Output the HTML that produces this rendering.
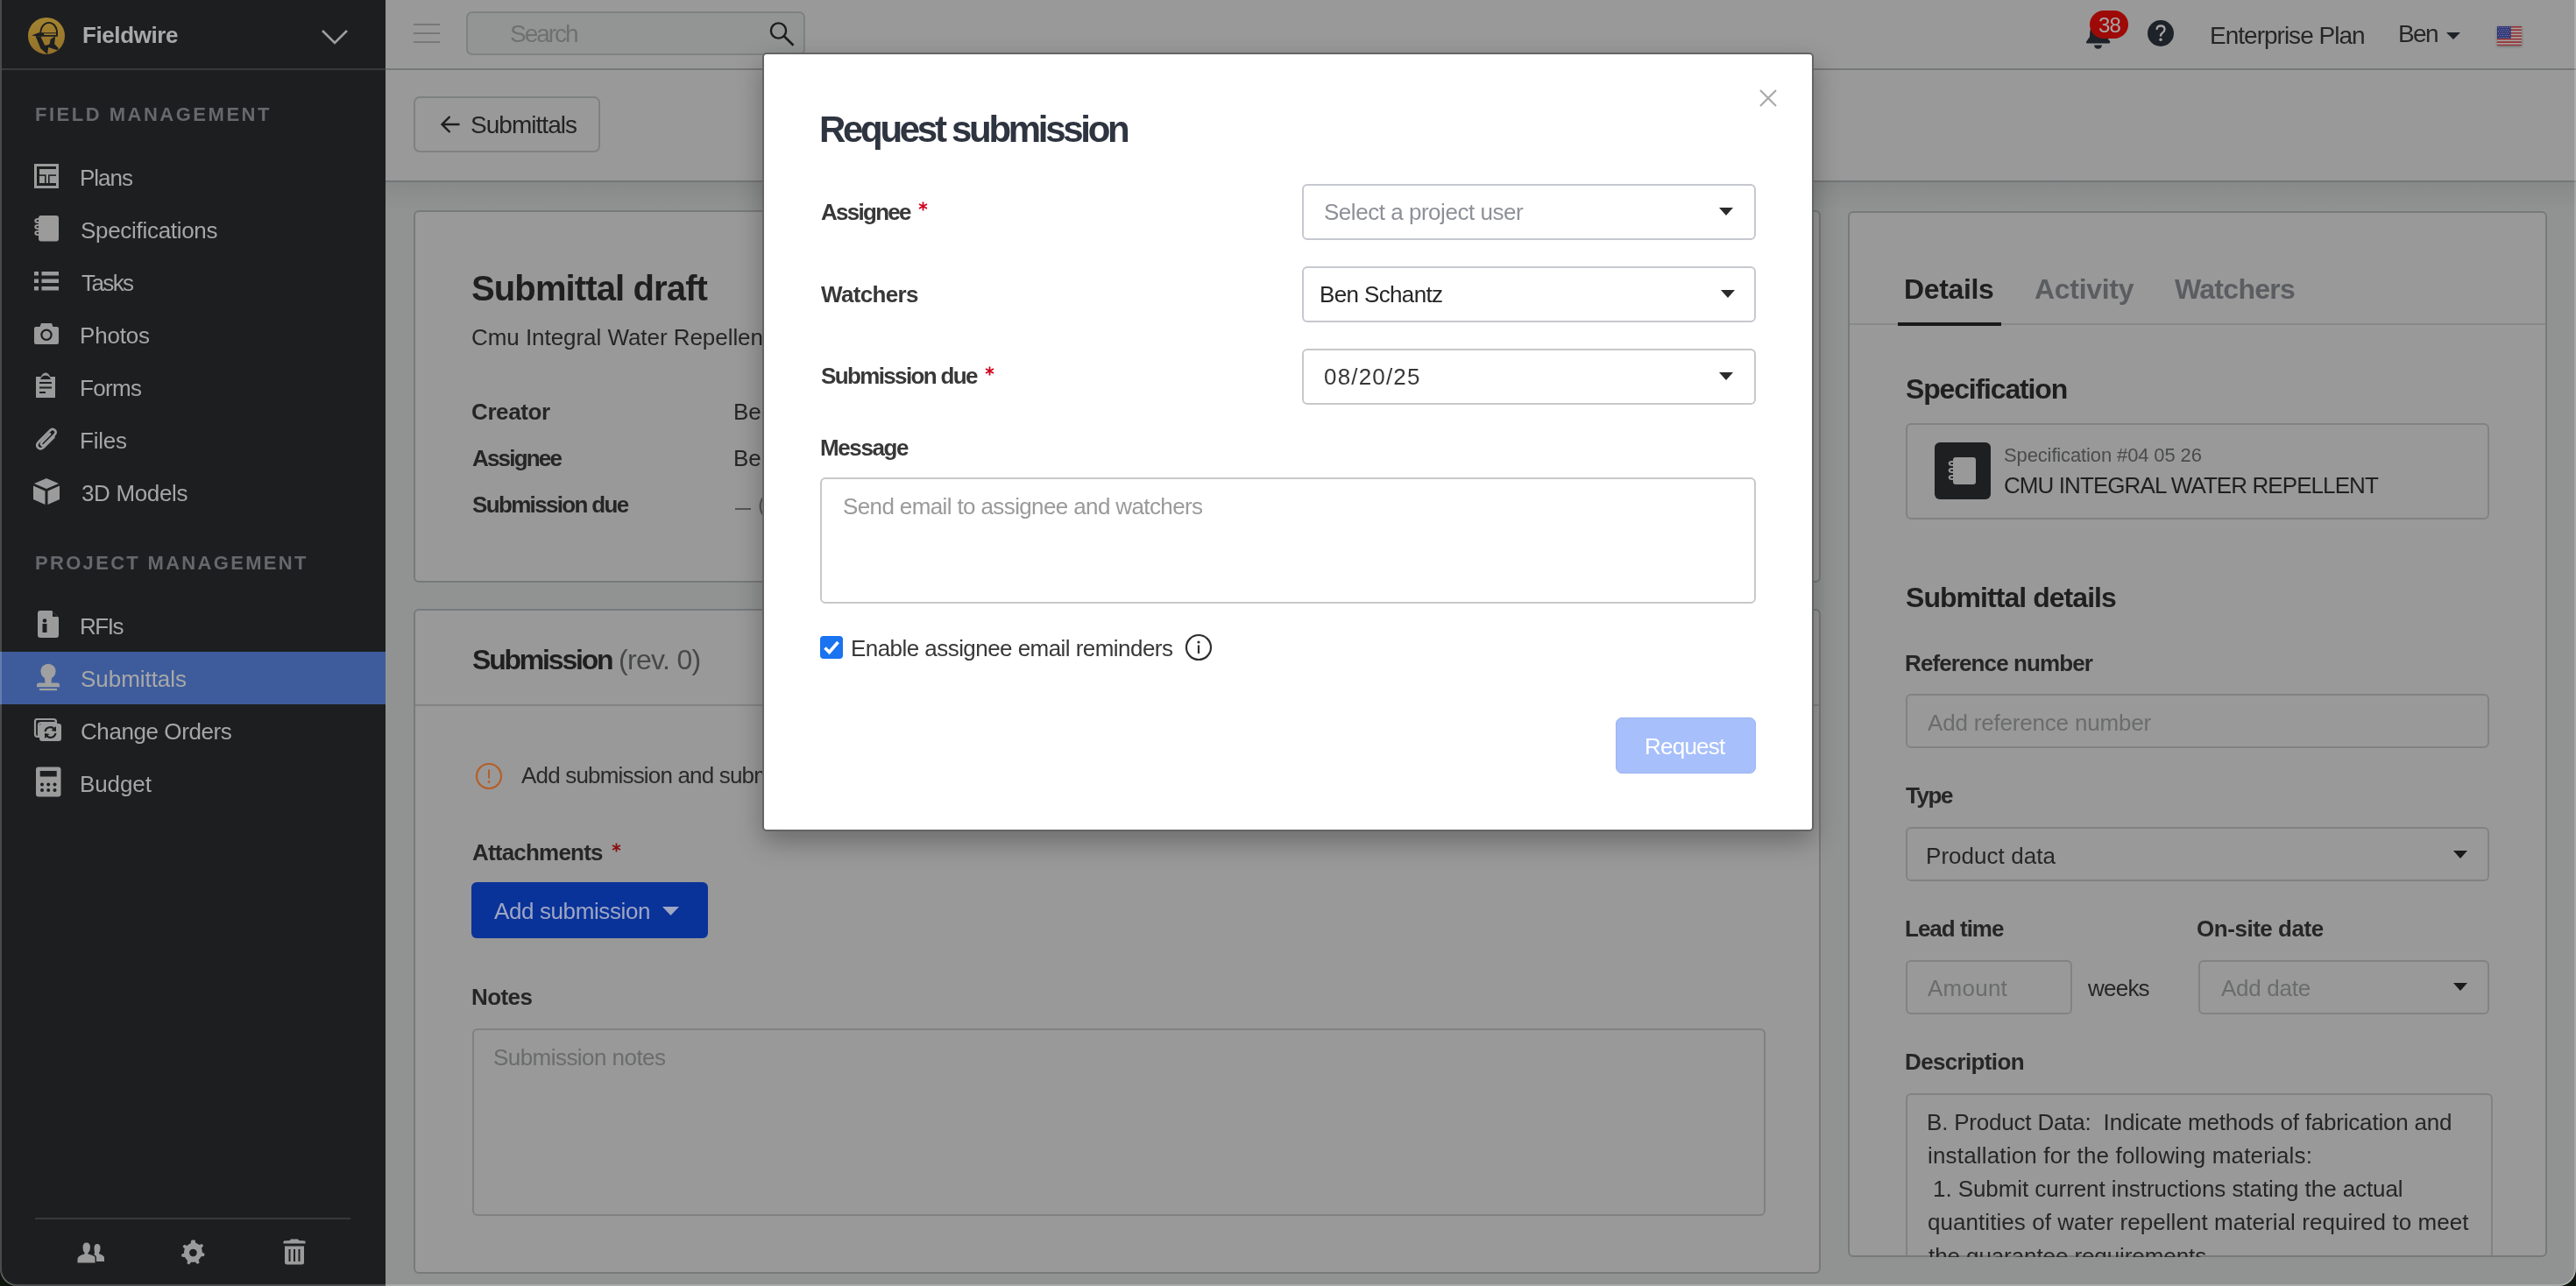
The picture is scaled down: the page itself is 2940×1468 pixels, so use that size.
<!DOCTYPE html>
<html><head><meta charset="utf-8"><title>Fieldwire - Request submission</title>
<style>
html,body{margin:0;padding:0;width:2940px;height:1468px;overflow:hidden;background:#8f9191;font-family:"Liberation Sans",sans-serif;}
body{position:relative;}
.t{position:absolute;white-space:pre;font-family:"Liberation Sans",sans-serif;will-change:transform;}
</style></head><body>
<div style="position:absolute;left:440px;top:0px;width:2500px;height:1468px;background:#919393"></div>
<div style="position:absolute;left:440px;top:0px;width:2500px;height:207px;background:#999999"></div>
<div style="position:absolute;left:440px;top:78px;width:2500px;height:2px;background:#767878"></div>
<div style="position:absolute;left:440px;top:206px;width:2500px;height:2px;background:#737577"></div>
<div style="position:absolute;left:440px;top:208px;width:2500px;height:32px;background:linear-gradient(#888a8a,#919393)"></div>
<div style="position:absolute;left:0px;top:0px;width:440px;height:1468px;background:#1d1e20"></div>
<div style="position:absolute;left:2px;top:78px;width:438px;height:2px;background:#38393b"></div>
<div class="t" style="left:94.0px;top:27.3px;font-weight:bold;font-size:26px;line-height:26px;color:#a9a9a9;letter-spacing:-0.40px;">Fieldwire</div>
<div class="t" style="left:39.7px;top:120.4px;font-weight:bold;font-size:22px;line-height:22px;color:#66686c;letter-spacing:2.51px;">FIELD MANAGEMENT</div>
<div class="t" style="left:91.0px;top:189.8px;font-weight:normal;font-size:26px;line-height:26px;color:#a6a6a6;letter-spacing:-1.01px;">Plans</div>
<div class="t" style="left:92.0px;top:249.8px;font-weight:normal;font-size:26px;line-height:26px;color:#a6a6a6;letter-spacing:-0.30px;">Specifications</div>
<div class="t" style="left:93.0px;top:309.8px;font-weight:normal;font-size:26px;line-height:26px;color:#a6a6a6;letter-spacing:-1.61px;">Tasks</div>
<div class="t" style="left:91.0px;top:369.8px;font-weight:normal;font-size:26px;line-height:26px;color:#a6a6a6;letter-spacing:-0.19px;">Photos</div>
<div class="t" style="left:91.0px;top:429.8px;font-weight:normal;font-size:26px;line-height:26px;color:#a6a6a6;letter-spacing:-0.66px;">Forms</div>
<div class="t" style="left:91.0px;top:489.8px;font-weight:normal;font-size:26px;line-height:26px;color:#a6a6a6;letter-spacing:-0.22px;">Files</div>
<div class="t" style="left:93.0px;top:549.8px;font-weight:normal;font-size:26px;line-height:26px;color:#a6a6a6;letter-spacing:-0.35px;">3D Models</div>
<div class="t" style="left:39.7px;top:632.4px;font-weight:bold;font-size:22px;line-height:22px;color:#66686c;letter-spacing:2.31px;">PROJECT MANAGEMENT</div>
<div style="position:absolute;left:0px;top:744px;width:440px;height:60px;background:#3e5c9c"></div>
<div class="t" style="left:91.0px;top:702.0px;font-weight:normal;font-size:26px;line-height:26px;color:#a6a6a6;letter-spacing:-1.46px;">RFIs</div>
<div class="t" style="left:92.0px;top:762.0px;font-weight:normal;font-size:26px;line-height:26px;color:#a8a8a8;letter-spacing:-0.04px;">Submittals</div>
<div class="t" style="left:92.0px;top:822.0px;font-weight:normal;font-size:26px;line-height:26px;color:#a6a6a6;letter-spacing:-0.42px;">Change Orders</div>
<div class="t" style="left:91.0px;top:882.0px;font-weight:normal;font-size:26px;line-height:26px;color:#a6a6a6;letter-spacing:-0.10px;">Budget</div>
<div style="position:absolute;left:40px;top:1390px;width:360px;height:2px;background:#38393b"></div>
<div style="position:absolute;left:472px;top:27px;width:30px;height:2px;background:#777879"></div>
<div style="position:absolute;left:472px;top:37px;width:30px;height:2px;background:#777879"></div>
<div style="position:absolute;left:472px;top:47px;width:30px;height:2px;background:#777879"></div>
<div style="position:absolute;left:532px;top:13px;width:387px;height:50px;background:#939595;border:2px solid #7f8181;border-radius:7px;box-sizing:border-box"></div>
<div class="t" style="left:582.0px;top:24.8px;font-weight:normal;font-size:28px;line-height:28px;color:#6f7070;letter-spacing:-2.03px;">Search</div>
<div class="t" style="left:2522.0px;top:27.1px;font-weight:normal;font-size:28px;line-height:28px;color:#262626;letter-spacing:-0.99px;">Enterprise Plan</div>
<div class="t" style="left:2737.0px;top:24.8px;font-weight:normal;font-size:28px;line-height:28px;color:#262626;letter-spacing:-1.62px;">Ben</div>
<svg style="position:absolute;left:876px;top:23px;overflow:visible;" width="34" height="32" viewBox="0 0 34 32"><circle cx="12.5" cy="12" r="8.6" fill="none" stroke="#1c1c1c" stroke-width="2.4"/><path d="M18.8,18.3 L29.5,28.7" stroke="#1c1c1c" stroke-width="2.6"/></svg>
<svg style="position:absolute;left:2380px;top:12px;overflow:visible;" width="32" height="46" viewBox="0 0 32 46"><path d="M5,30 Q5,22 7,18 L20,18 Q24,24 24,30 L28,35 Q29,37.5 26.5,37.5 L2.5,37.5 Q0,37.5 1.5,35 Z" fill="#1e2229"/><path d="M10,39.5 L19,39.5 Q18.5,43.7 14.5,43.7 Q10.5,43.7 10,39.5 Z" fill="#1e2229"/></svg>
<div style="position:absolute;left:2385px;top:12px;width:44px;height:32px;background:#9e0a07;border-radius:16px"></div>
<div class="t" style="left:2394.7px;top:16.7px;font-weight:normal;font-size:24px;line-height:24px;color:#a6a6a6;letter-spacing:-0.85px;">38</div>
<svg style="position:absolute;left:2451px;top:23px;overflow:visible;" width="30" height="30" viewBox="0 0 30 30"><circle cx="15" cy="15" r="15" fill="#1e2229"/><path d="M10.5,10.8 Q10.8,6.5 15,6.5 Q19.5,6.5 19.5,10.5 Q19.5,13 17,14.5 Q15,15.7 15,18.5" fill="none" stroke="#a5a5a5" stroke-width="2.3"/><circle cx="15" cy="22.3" r="1.7" fill="#a5a5a5"/></svg>
<svg style="position:absolute;left:2792px;top:37px;overflow:visible;" width="16" height="8" viewBox="0 0 16 8"><path d="M0,0 L16,0 L8,8 Z" fill="#1e2129"/></svg>
<svg style="position:absolute;left:2850px;top:29.5px;filter:drop-shadow(0 1px 1.5px rgba(0,0,0,0.35))" width="28" height="22.5" viewBox="0 0 28 22.5"><rect x="0" y="0.00" width="28" height="1.78" fill="#9a3236"/><rect x="0" y="1.73" width="28" height="1.78" fill="#a9a3a3"/><rect x="0" y="3.46" width="28" height="1.78" fill="#9a3236"/><rect x="0" y="5.19" width="28" height="1.78" fill="#a9a3a3"/><rect x="0" y="6.92" width="28" height="1.78" fill="#9a3236"/><rect x="0" y="8.65" width="28" height="1.78" fill="#a9a3a3"/><rect x="0" y="10.38" width="28" height="1.78" fill="#9a3236"/><rect x="0" y="12.12" width="28" height="1.78" fill="#a9a3a3"/><rect x="0" y="13.85" width="28" height="1.78" fill="#9a3236"/><rect x="0" y="15.58" width="28" height="1.78" fill="#a9a3a3"/><rect x="0" y="17.31" width="28" height="1.78" fill="#9a3236"/><rect x="0" y="19.04" width="28" height="1.78" fill="#a9a3a3"/><rect x="0" y="20.77" width="28" height="1.78" fill="#9a3236"/><rect x="0" y="0" width="15.7" height="13.9" fill="#2f3575"/><circle cx="1.60" cy="1.40" r="0.55" fill="#8e93b8"/><circle cx="4.10" cy="1.40" r="0.55" fill="#8e93b8"/><circle cx="6.60" cy="1.40" r="0.55" fill="#8e93b8"/><circle cx="9.10" cy="1.40" r="0.55" fill="#8e93b8"/><circle cx="11.60" cy="1.40" r="0.55" fill="#8e93b8"/><circle cx="14.10" cy="1.40" r="0.55" fill="#8e93b8"/><circle cx="2.85" cy="3.65" r="0.55" fill="#8e93b8"/><circle cx="5.35" cy="3.65" r="0.55" fill="#8e93b8"/><circle cx="7.85" cy="3.65" r="0.55" fill="#8e93b8"/><circle cx="10.35" cy="3.65" r="0.55" fill="#8e93b8"/><circle cx="12.85" cy="3.65" r="0.55" fill="#8e93b8"/><circle cx="1.60" cy="5.90" r="0.55" fill="#8e93b8"/><circle cx="4.10" cy="5.90" r="0.55" fill="#8e93b8"/><circle cx="6.60" cy="5.90" r="0.55" fill="#8e93b8"/><circle cx="9.10" cy="5.90" r="0.55" fill="#8e93b8"/><circle cx="11.60" cy="5.90" r="0.55" fill="#8e93b8"/><circle cx="14.10" cy="5.90" r="0.55" fill="#8e93b8"/><circle cx="2.85" cy="8.15" r="0.55" fill="#8e93b8"/><circle cx="5.35" cy="8.15" r="0.55" fill="#8e93b8"/><circle cx="7.85" cy="8.15" r="0.55" fill="#8e93b8"/><circle cx="10.35" cy="8.15" r="0.55" fill="#8e93b8"/><circle cx="12.85" cy="8.15" r="0.55" fill="#8e93b8"/><circle cx="1.60" cy="10.40" r="0.55" fill="#8e93b8"/><circle cx="4.10" cy="10.40" r="0.55" fill="#8e93b8"/><circle cx="6.60" cy="10.40" r="0.55" fill="#8e93b8"/><circle cx="9.10" cy="10.40" r="0.55" fill="#8e93b8"/><circle cx="11.60" cy="10.40" r="0.55" fill="#8e93b8"/><circle cx="14.10" cy="10.40" r="0.55" fill="#8e93b8"/><circle cx="2.85" cy="12.65" r="0.55" fill="#8e93b8"/><circle cx="5.35" cy="12.65" r="0.55" fill="#8e93b8"/><circle cx="7.85" cy="12.65" r="0.55" fill="#8e93b8"/><circle cx="10.35" cy="12.65" r="0.55" fill="#8e93b8"/><circle cx="12.85" cy="12.65" r="0.55" fill="#8e93b8"/></svg>
<div style="position:absolute;left:472px;top:110px;width:213px;height:64px;border:2px solid #7e8081;border-radius:7px;box-sizing:border-box"></div>
<svg style="position:absolute;left:502px;top:131px;overflow:visible;" width="24" height="22" viewBox="0 0 24 22"><path d="M22.5,11 L3,11 M11.5,2 L2.5,11 L11.5,20" fill="none" stroke="#1e1e1e" stroke-width="2.4"/></svg>
<div class="t" style="left:537.4px;top:128.9px;font-weight:normal;font-size:28px;line-height:28px;color:#232323;letter-spacing:-0.97px;">Submittals</div>
<div style="position:absolute;left:472px;top:240px;width:1606px;height:425px;background:#999999;border:2px solid #77797b;border-radius:6px;box-sizing:border-box"></div>
<div class="t" style="left:538.3px;top:309.1px;font-weight:bold;font-size:40px;line-height:40px;color:#1f1f1f;letter-spacing:-0.88px;">Submittal draft</div>
<div class="t" style="left:538.0px;top:371.7px;font-weight:normal;font-size:26px;line-height:26px;color:#262626;letter-spacing:-0.05px;">Cmu Integral Water Repellent</div>
<div class="t" style="left:538.0px;top:457.0px;font-weight:bold;font-size:26px;line-height:26px;color:#262626;letter-spacing:-0.39px;">Creator</div>
<div class="t" style="left:539.0px;top:509.7px;font-weight:bold;font-size:26px;line-height:26px;color:#262626;letter-spacing:-1.81px;">Assignee</div>
<div class="t" style="left:539.0px;top:562.5px;font-weight:bold;font-size:26px;line-height:26px;color:#262626;letter-spacing:-1.66px;">Submission due</div>
<div class="t" style="left:837.0px;top:457.0px;font-weight:normal;font-size:26px;line-height:26px;color:#262626;letter-spacing:0.00px;">Ben Schantz</div>
<div class="t" style="left:837.0px;top:509.7px;font-weight:normal;font-size:26px;line-height:26px;color:#262626;letter-spacing:0.00px;">Ben Schantz</div>
<div style="position:absolute;left:839px;top:580px;width:18px;height:2px;background:#555757"></div>
<div class="t" style="left:865.0px;top:562.5px;font-weight:normal;font-size:26px;line-height:26px;color:#555757;letter-spacing:0.00px;">(</div>
<div style="position:absolute;left:472px;top:695px;width:1606px;height:759px;background:#999999;border:2px solid #77797b;border-radius:6px;box-sizing:border-box"></div>
<div class="t" style="left:539.0px;top:736.5px;font-weight:bold;font-size:32px;line-height:32px;color:#1f1f1f;letter-spacing:-2.20px;">Submission</div>
<div class="t" style="left:706.4px;top:736.5px;font-weight:normal;font-size:32px;line-height:32px;color:#474849;letter-spacing:-0.67px;">(rev. 0)</div>
<div style="position:absolute;left:474px;top:804px;width:1602px;height:2px;background:#828384"></div>
<div class="t" style="left:595.0px;top:871.7px;font-weight:normal;font-size:26px;line-height:26px;color:#2a2a2a;letter-spacing:-0.82px;">Add submission and submit to assignee</div>
<div class="t" style="left:539.0px;top:959.8px;font-weight:bold;font-size:26px;line-height:26px;color:#262626;letter-spacing:-0.80px;">Attachments</div>
<svg style="position:absolute;left:698px;top:962px;overflow:visible;" width="11" height="11" viewBox="0 0 11 11"><path d="M5.5,0.5 L5.5,10.5 M1,3 L10,8 M10,3 L1,8" stroke="#8b1010" stroke-width="1.8"/></svg>
<svg style="position:absolute;left:542px;top:870px;overflow:visible;" width="32" height="32" viewBox="0 0 32 32"><circle cx="16" cy="16" r="14" fill="none" stroke="#b4602a" stroke-width="2.2"/><rect x="15" y="8.5" width="2" height="10" fill="#b4602a"/><circle cx="16" cy="22.5" r="1.4" fill="#b4602a"/></svg>
<div style="position:absolute;left:538px;top:1007px;width:270px;height:64px;background:#0a3399;border-radius:6px"></div>
<div class="t" style="left:564.0px;top:1026.8px;font-weight:normal;font-size:26px;line-height:26px;color:#9ea6c4;letter-spacing:-0.39px;">Add submission</div>
<svg style="position:absolute;left:756px;top:1035px;overflow:visible;" width="19" height="10" viewBox="0 0 19 10"><path d="M0,0 L19,0 L9.5,10 Z" fill="#9ea6c4"/></svg>
<div class="t" style="left:538.0px;top:1125.0px;font-weight:bold;font-size:26px;line-height:26px;color:#262626;letter-spacing:-0.57px;">Notes</div>
<div style="position:absolute;left:539px;top:1174px;width:1476px;height:214px;border:2px solid #808182;border-radius:6px;box-sizing:border-box"></div>
<div class="t" style="left:563.4px;top:1193.8px;font-weight:normal;font-size:26px;line-height:26px;color:#6b6c6c;letter-spacing:-0.55px;">Submission notes</div>
<div style="position:absolute;left:2109px;top:241px;width:798px;height:1194px;background:#999999;border:2px solid #77797b;border-radius:6px;box-sizing:border-box;overflow:hidden"></div>
<div style="position:absolute;left:2111px;top:369px;width:794px;height:2px;background:#878889"></div>
<div style="position:absolute;left:2166px;top:368px;width:118px;height:4px;background:#1a1a1a"></div>
<div class="t" style="left:2172.6px;top:313.9px;font-weight:bold;font-size:32px;line-height:32px;color:#1f1f1f;letter-spacing:-0.36px;">Details</div>
<div class="t" style="left:2321.7px;top:313.9px;font-weight:bold;font-size:32px;line-height:32px;color:#5b5d61;letter-spacing:-0.31px;">Activity</div>
<div class="t" style="left:2481.8px;top:313.9px;font-weight:bold;font-size:32px;line-height:32px;color:#5b5d61;letter-spacing:-0.72px;">Watchers</div>
<div class="t" style="left:2174.6px;top:427.9px;font-weight:bold;font-size:32px;line-height:32px;color:#1f1f1f;letter-spacing:-1.16px;">Specification</div>
<div style="position:absolute;left:2175px;top:483px;width:666px;height:110px;border:2px solid #818283;border-radius:6px;box-sizing:border-box"></div>
<div style="position:absolute;left:2208px;top:505px;width:64px;height:65px;background:#1e1f21;border-radius:6px"></div>
<svg style="position:absolute;left:2223px;top:521px;overflow:visible;" width="34" height="34" viewBox="0 0 34 34"><rect x="6" y="1" width="26" height="31" rx="3" fill="#999999"/><g fill="none" stroke="#999999" stroke-width="2"><ellipse cx="5" cy="8" rx="3.3" ry="2"/><ellipse cx="5" cy="16" rx="3.3" ry="2"/><ellipse cx="5" cy="24" rx="3.3" ry="2"/></g></svg>
<div class="t" style="left:2287.0px;top:508.8px;font-weight:normal;font-size:22px;line-height:22px;color:#4a4b4c;letter-spacing:-0.13px;">Specification #04 05 26</div>
<div class="t" style="left:2287.0px;top:541.3px;font-weight:normal;font-size:26px;line-height:26px;color:#1f1f1f;letter-spacing:-0.92px;">CMU INTEGRAL WATER REPELLENT</div>
<div class="t" style="left:2174.6px;top:665.9px;font-weight:bold;font-size:32px;line-height:32px;color:#1f1f1f;letter-spacing:-0.95px;">Submittal details</div>
<div class="t" style="left:2173.6px;top:743.6px;font-weight:bold;font-size:26px;line-height:26px;color:#262626;letter-spacing:-0.89px;">Reference number</div>
<div style="position:absolute;left:2175px;top:792px;width:666px;height:62px;border:2px solid #818283;border-radius:6px;box-sizing:border-box"></div>
<div class="t" style="left:2200.3px;top:812.0px;font-weight:normal;font-size:26px;line-height:26px;color:#6b6c6c;letter-spacing:-0.19px;">Add reference number</div>
<div class="t" style="left:2174.6px;top:895.0px;font-weight:bold;font-size:26px;line-height:26px;color:#262626;letter-spacing:-1.43px;">Type</div>
<div style="position:absolute;left:2175px;top:944px;width:666px;height:62px;border:2px solid #818283;border-radius:6px;box-sizing:border-box"></div>
<div class="t" style="left:2198.3px;top:963.5px;font-weight:normal;font-size:26px;line-height:26px;color:#262626;letter-spacing:0.04px;">Product data</div>
<svg style="position:absolute;left:2800px;top:971px;overflow:visible;" width="16" height="9" viewBox="0 0 16 9"><path d="M0,0 L16,0 L8,9 Z" fill="#1a1a1a"/></svg>
<div class="t" style="left:2173.6px;top:1047.3px;font-weight:bold;font-size:26px;line-height:26px;color:#262626;letter-spacing:-0.99px;">Lead time</div>
<div class="t" style="left:2507.2px;top:1047.3px;font-weight:bold;font-size:26px;line-height:26px;color:#262626;letter-spacing:-0.46px;">On-site date</div>
<div style="position:absolute;left:2175px;top:1096px;width:190px;height:62px;border:2px solid #818283;border-radius:6px;box-sizing:border-box"></div>
<div class="t" style="left:2200.0px;top:1115.4px;font-weight:normal;font-size:26px;line-height:26px;color:#6b6c6c;letter-spacing:0.24px;">Amount</div>
<div class="t" style="left:2383.0px;top:1115.4px;font-weight:normal;font-size:26px;line-height:26px;color:#262626;letter-spacing:-0.77px;">weeks</div>
<div style="position:absolute;left:2509px;top:1096px;width:332px;height:62px;border:2px solid #818283;border-radius:6px;box-sizing:border-box"></div>
<div class="t" style="left:2535.0px;top:1115.4px;font-weight:normal;font-size:26px;line-height:26px;color:#6b6c6c;letter-spacing:-0.28px;">Add date</div>
<svg style="position:absolute;left:2800px;top:1122px;overflow:visible;" width="16" height="9" viewBox="0 0 16 9"><path d="M0,0 L16,0 L8,9 Z" fill="#1a1a1a"/></svg>
<div class="t" style="left:2173.8px;top:1199.0px;font-weight:bold;font-size:26px;line-height:26px;color:#262626;letter-spacing:-0.65px;">Description</div>
<div style="position:absolute;left:2111px;top:243px;width:794px;height:1190px;overflow:hidden"><div style="position:absolute;left:64px;top:1005px;width:670px;height:300px;border:2px solid #818283;border-radius:6px;box-sizing:border-box"></div></div>
<div class="t" style="left:2198.8px;top:1268.4px;font-weight:normal;font-size:26px;line-height:26px;color:#262626;letter-spacing:-0.20px;">B. Product Data:  Indicate methods of fabrication and</div>
<div class="t" style="left:2199.8px;top:1306.2px;font-weight:normal;font-size:26px;line-height:26px;color:#262626;letter-spacing:0.17px;">installation for the following materials:</div>
<div class="t" style="left:2205.9px;top:1344.0px;font-weight:normal;font-size:26px;line-height:26px;color:#262626;letter-spacing:-0.08px;">1. Submit current instructions stating the actual</div>
<div class="t" style="left:2199.8px;top:1381.8px;font-weight:normal;font-size:26px;line-height:26px;color:#262626;letter-spacing:0.06px;">quantities of water repellent material required to meet</div>
<div class="t" style="left:2200.7px;top:1421.0px;font-weight:normal;font-size:26px;line-height:26px;color:#262626;letter-spacing:-0.09px;clip-path:inset(-20px -20px 12.6px -20px)">the guarantee requirements.</div>
<div style="position:absolute;left:870px;top:60px;width:1200px;height:889px;background:#ffffff;border:2px solid #646464;border-radius:5px;box-sizing:border-box;box-shadow:0 12px 30px rgba(0,0,0,0.3)"></div>
<svg style="position:absolute;left:2008px;top:102px;overflow:visible;" width="20" height="20" viewBox="0 0 20 20"><path d="M1,1 L19,19 M19,1 L1,19" stroke="#a9a9a9" stroke-width="2.2"/></svg>
<svg style="position:absolute;left:1048px;top:230px;overflow:visible;" width="11" height="11" viewBox="0 0 11 11"><path d="M5.5,0.5 L5.5,10.5 M1,3 L10,8 M10,3 L1,8" stroke="#d0021b" stroke-width="1.8"/></svg>
<svg style="position:absolute;left:1124px;top:418px;overflow:visible;" width="11" height="11" viewBox="0 0 11 11"><path d="M5.5,0.5 L5.5,10.5 M1,3 L10,8 M10,3 L1,8" stroke="#d0021b" stroke-width="1.8"/></svg>
<svg style="position:absolute;left:1962px;top:237px;overflow:visible;" width="16" height="9" viewBox="0 0 16 9"><path d="M0,0 L16,0 L8,9 Z" fill="#2b2b2b"/></svg>
<svg style="position:absolute;left:1964px;top:331px;overflow:visible;" width="16" height="9" viewBox="0 0 16 9"><path d="M0,0 L16,0 L8,9 Z" fill="#2b2b2b"/></svg>
<svg style="position:absolute;left:1962px;top:425px;overflow:visible;" width="16" height="9" viewBox="0 0 16 9"><path d="M0,0 L16,0 L8,9 Z" fill="#2b2b2b"/></svg>
<div class="t" style="left:935.0px;top:127.4px;font-weight:bold;font-size:42px;line-height:42px;color:#2f3540;letter-spacing:-3.30px;">Request submission</div>
<div class="t" style="left:936.6px;top:228.8px;font-weight:bold;font-size:26px;line-height:26px;color:#383838;letter-spacing:-1.73px;">Assignee</div>
<div class="t" style="left:936.6px;top:322.8px;font-weight:bold;font-size:26px;line-height:26px;color:#383838;letter-spacing:-0.66px;">Watchers</div>
<div class="t" style="left:936.6px;top:416.4px;font-weight:bold;font-size:26px;line-height:26px;color:#383838;letter-spacing:-1.64px;">Submission due</div>
<div class="t" style="left:935.6px;top:498.0px;font-weight:bold;font-size:26px;line-height:26px;color:#383838;letter-spacing:-1.40px;">Message</div>
<div style="position:absolute;left:1486px;top:210px;width:518px;height:64px;border:2px solid #c6c8cf;border-radius:6px;box-sizing:border-box"></div>
<div style="position:absolute;left:1486px;top:304px;width:518px;height:64px;border:2px solid #c6c8cf;border-radius:6px;box-sizing:border-box"></div>
<div style="position:absolute;left:1486px;top:398px;width:518px;height:64px;border:2px solid #c8c8c8;border-radius:6px;box-sizing:border-box"></div>
<div class="t" style="left:1511.0px;top:228.8px;font-weight:normal;font-size:26px;line-height:26px;color:#8e9099;letter-spacing:-0.47px;">Select a project user</div>
<div class="t" style="left:1506.0px;top:322.9px;font-weight:normal;font-size:26px;line-height:26px;color:#262626;letter-spacing:-0.64px;">Ben Schantz</div>
<div class="t" style="left:1510.5px;top:416.9px;font-weight:normal;font-size:26px;line-height:26px;color:#383838;letter-spacing:1.18px;">08/20/25</div>
<div style="position:absolute;left:936px;top:545px;width:1068px;height:144px;border:2px solid #c8c8c8;border-radius:6px;box-sizing:border-box"></div>
<div class="t" style="left:961.5px;top:565.0px;font-weight:normal;font-size:26px;line-height:26px;color:#9a9a9a;letter-spacing:-0.62px;">Send email to assignee and watchers</div>
<div style="position:absolute;left:936px;top:726px;width:26px;height:26px;background:#1a73f0;border-radius:4px"></div>
<svg style="position:absolute;left:936px;top:726px;overflow:visible;" width="26" height="26" viewBox="0 0 26 26"><path d="M5.5,13.5 L10.5,18.5 L20.5,7" fill="none" stroke="#ffffff" stroke-width="3.6"/></svg>
<svg style="position:absolute;left:1352px;top:723px;overflow:visible;" width="32" height="32" viewBox="0 0 32 32"><circle cx="16" cy="16" r="14" fill="none" stroke="#2f2f2f" stroke-width="2.2"/><circle cx="16" cy="10" r="1.6" fill="#2f2f2f"/><rect x="14.9" y="13.5" width="2.2" height="9.5" fill="#2f2f2f"/></svg>
<div class="t" style="left:971.0px;top:726.8px;font-weight:normal;font-size:26px;line-height:26px;color:#383838;letter-spacing:-0.55px;">Enable assignee email reminders</div>
<div style="position:absolute;left:1844px;top:819px;width:160px;height:64px;background:#a7bffb;border:1.5px solid #9cb3f2;box-sizing:border-box;border-radius:7px"></div>
<div class="t" style="left:1877.0px;top:839.0px;font-weight:normal;font-size:26px;line-height:26px;color:#ffffff;letter-spacing:-0.77px;">Request</div>
<svg style="position:absolute;left:28px;top:16px;overflow:visible;" width="52" height="50" viewBox="0 0 1337 1286">
<defs><linearGradient id="gold" x1="0" y1="0" x2="0" y2="1"><stop offset="0" stop-color="#a3842f"/><stop offset="1" stop-color="#94712b"/></linearGradient></defs>
<circle cx="642" cy="640" r="540" fill="url(#gold)"/>
<path d="M470,580 C470,370 590,255 715,255 C845,255 955,370 955,580" fill="none" stroke="#1d1e20" stroke-width="48"/>
<path d="M205,630 L420,545 L975,545 L975,660 L470,660 Z" fill="#1d1e20"/>
<rect x="570" y="572" width="355" height="45" fill="#9a7a2d"/>
<path d="M320,640 L480,660 L560,840 L590,920 L690,900 L720,800 L790,700 L900,660 L880,880 L1000,1010 L960,1060 L700,980 L670,1180 L470,1010 L420,880 Z" fill="#1d1e20"/>
<path d="M485,690 L860,690 L760,740 L745,860 L700,905 L600,905 L560,820 Z" fill="#98772c"/>
</svg>
<svg style="position:absolute;left:366px;top:32px;overflow:visible;" width="32" height="20" viewBox="0 0 32 20"><path d="M2,3 L16,17 L30,3" fill="none" stroke="#9f9f9f" stroke-width="2.6"/></svg>
<svg style="position:absolute;left:39px;top:187px;overflow:visible;" width="28" height="28" viewBox="0 0 28 28"><rect x="1.5" y="1.5" width="25" height="25" fill="none" stroke="#9b9b9b" stroke-width="3"/>
<rect x="6" y="6" width="19" height="16" fill="#9b9b9b"/>
<rect x="6" y="12.3" width="6.5" height="1.6" fill="#1d1e20"/><rect x="17.5" y="12.3" width="7.5" height="1.6" fill="#1d1e20"/>
<rect x="12" y="12.3" width="1.6" height="9.7" fill="#1d1e20"/><rect x="16" y="12.3" width="1.6" height="9.7" fill="#1d1e20"/></svg>
<svg style="position:absolute;left:39px;top:246px;overflow:visible;" width="28" height="30" viewBox="0 0 28 30"><rect x="5" y="0" width="23" height="29.5" rx="3" fill="#9b9b9b"/>
<g fill="none" stroke="#9b9b9b" stroke-width="2"><ellipse cx="4.5" cy="6" rx="3.2" ry="2"/><ellipse cx="4.5" cy="13" rx="3.2" ry="2"/><ellipse cx="4.5" cy="20" rx="3.2" ry="2"/></g></svg>
<svg style="position:absolute;left:39px;top:310px;overflow:visible;" width="28" height="23" viewBox="0 0 28 23"><g fill="#9b9b9b"><rect x="0" y="0" width="5" height="4.5"/><rect x="8.5" y="0" width="19.5" height="4.5"/>
<rect x="0" y="8.5" width="5" height="4.5"/><rect x="8.5" y="8.5" width="19.5" height="4.5"/>
<rect x="0" y="17" width="5" height="4.5"/><rect x="8.5" y="17" width="19.5" height="4.5"/></g></svg>
<svg style="position:absolute;left:39px;top:369px;overflow:visible;" width="28" height="24" viewBox="0 0 28 24"><path d="M8,0 L20,0 L21.5,4 L26,4 Q28,4 28,6 L28,22 Q28,24 26,24 L2,24 Q0,24 0,22 L0,6 Q0,4 2,4 L6.5,4 Z" fill="#9b9b9b"/>
<circle cx="14" cy="13.3" r="5.6" fill="none" stroke="#1d1e20" stroke-width="2.2"/></svg>
<svg style="position:absolute;left:41px;top:425px;overflow:visible;" width="22" height="29" viewBox="0 0 22 29"><path d="M0,5 L6,5 Q7,1 11,0.5 Q15,1 16,5 L22,5 L22,29 L0,29 Z" fill="#9b9b9b"/>
<path d="M5,8 Q7,3.5 11,3.5 Q15,3.5 17,8 Z" fill="#1d1e20"/><circle cx="11" cy="2.2" r="1.4" fill="#9b9b9b"/>
<g fill="#1d1e20"><rect x="4" y="11" width="14" height="2"/><rect x="4" y="16.5" width="14" height="2"/><rect x="4" y="22" width="7" height="2"/></g></svg>
<svg style="position:absolute;left:40px;top:487px;overflow:visible;" width="25" height="29" viewBox="0 0 25 29"><path d="M21.5,12 L10.5,23 Q6.5,27 3.5,24 Q0.5,21 4.5,17 L17,4.5 Q20,1.5 22.5,4 Q25,6.5 22,9.5 L11,20.5 Q9,22.5 7.5,21 Q6,19.5 8,17.5 L17,8.5" fill="none" stroke="#9b9b9b" stroke-width="2.6" stroke-linecap="round"/></svg>
<svg style="position:absolute;left:37px;top:545px;overflow:visible;" width="32" height="32" viewBox="0 0 32 32"><path d="M16,1 L30,7 L16,13 L2,7 Z" fill="#9b9b9b"/>
<path d="M1,9.5 L14.5,15.5 L14.5,31 L1,25 Z" fill="#9b9b9b"/><path d="M17.5,15.5 L31,9.5 L31,25 L17.5,31 Z" fill="#9b9b9b"/></svg>
<svg style="position:absolute;left:43px;top:697px;overflow:visible;" width="24" height="31" viewBox="0 0 24 31"><path d="M3,0 L16,0 L24,8 L24,28 Q24,31 21,31 L3,31 Q0,31 0,28 L0,3 Q0,0 3,0 Z" fill="#9b9b9b"/>
<path d="M17,1 L17,7 L23,7 Z" fill="#1d1e20"/>
<circle cx="8" cy="11.5" r="2.3" fill="#1d1e20"/><rect x="5.5" y="15" width="5" height="10" fill="#1d1e20"/></svg>
<svg style="position:absolute;left:41px;top:756px;overflow:visible;" width="28" height="33" viewBox="0 0 28 33"><g fill="#a0a0a0"><circle cx="14" cy="10.3" r="8.6"/><path d="M9,15 L19,15 Q17.5,19 17.5,23.5 L24.5,23.5 Q27,23.5 27,26 L27,28.3 L1,28.3 L1,26 Q1,23.5 3.5,23.5 L10.5,23.5 Q10.5,19 9,15 Z"/>
<rect x="4" y="30" width="20" height="2.2"/></g></svg>
<svg style="position:absolute;left:39px;top:820px;overflow:visible;" width="32" height="27" viewBox="0 0 32 27"><path d="M3,1 L22,1 Q25,1 25,4 L25,5 L8,5 Q5,5 5,8 L5,21 L4,21 Q1,21 1,18 L1,4 Q1,1 3,1 Z" fill="none" stroke="#9b9b9b" stroke-width="2.2"/>
<rect x="6" y="6" width="25" height="20" rx="3" fill="#9b9b9b"/>
<path d="M12.5,15 A6,6 0 0 1 23.5,13" fill="none" stroke="#1d1e20" stroke-width="2.2"/><path d="M25,9 L25,15 L19.5,14 Z" fill="#1d1e20"/>
<path d="M24.5,17 A6,6 0 0 1 13.5,19" fill="none" stroke="#1d1e20" stroke-width="2.2"/><path d="M12,23 L12,17 L17.5,18 Z" fill="#1d1e20"/></svg>
<svg style="position:absolute;left:41px;top:875px;overflow:visible;" width="29" height="35" viewBox="0 0 29 35"><rect x="0" y="0.5" width="28.5" height="34" rx="3" fill="#9b9b9b"/>
<rect x="4.7" y="5" width="19" height="6.5" fill="#1d1e20"/>
<g fill="#1d1e20"><circle cx="7" cy="20.5" r="2"/><circle cx="14.2" cy="20.5" r="2"/><circle cx="21.5" cy="20.5" r="2"/>
<circle cx="7" cy="27" r="2"/><circle cx="14.2" cy="27" r="2"/><circle cx="21.5" cy="27" r="2"/></g></svg>
<svg style="position:absolute;left:88px;top:1418px;overflow:visible;" width="32" height="25" viewBox="0 0 32 25"><g fill="#9b9b9b"><path d="M10.7,0.5 Q15,0.5 15,6 Q15,10 12.5,12 L12.5,13.5 Q19,15 20.5,17 L20.5,23.5 L0.5,23.5 L0.5,19 Q1,15 8.5,13.5 L8.5,12 Q6.5,10 6.5,6 Q6.5,0.5 10.7,0.5 Z"/>
<path d="M23,2 Q26.5,2 26.5,6.5 Q26.5,10.5 25,12 L25.5,13.5 Q31,15 31,18 L31,22 L22,22 L22,17 Q21.5,15 19,14 Q20.5,12.5 20,11.5 Q19.5,9.5 19.5,6.5 Q19.5,2 23,2 Z"/></g></svg>
<svg style="position:absolute;left:205px;top:1415px;overflow:visible;" width="30" height="30" viewBox="0 0 30 30"><path fill="#9b9b9b" fill-rule="evenodd" d="M15,0.5 L17.5,0.5 L18.3,3.8 Q20.5,4.5 22.3,6 L25.5,4.9 L27.2,7.1 L25,9.7 Q25.8,12 25.8,14.5 L28.6,16.3 L28,19 L24.6,19.3 Q23.5,21.6 21.7,23.2 L22.6,26.5 L20.2,27.9 L17.8,25.5 Q15.5,26 13,25.7 L11,28.4 L8.5,27.3 L9,23.9 Q7,22.3 6,20 L2.6,19.8 L2,17 L5,15.5 Q5,13 5.8,10.6 L3.5,8 L5.2,5.8 L8.5,7 Q10.3,5.3 12.6,4.3 L13.3,1 Z M15.4,10.7 A4.3,4.3 0 1 0 15.41,10.7 Z"/></svg>
<svg style="position:absolute;left:323px;top:1414px;overflow:visible;" width="26" height="31" viewBox="0 0 26 31"><g fill="#9b9b9b"><path d="M9,0.5 L17,0.5 Q18,1 18,2 L25,2.5 Q26,3 25.5,5.5 L0.5,5.5 Q0,3 1,2.5 L8,2 Q8,1 9,0.5 Z"/>
<path d="M2,8.5 L24,8.5 L24,27 Q24,29.5 21.5,29.5 L4.5,29.5 Q2,29.5 2,27 Z"/></g>
<g fill="#1d1e20"><rect x="6.5" y="12" width="2" height="14"/><rect x="12" y="12" width="2" height="14"/><rect x="17.5" y="12" width="2" height="14"/></g></svg>
<div style="position:absolute;left:0;top:0;width:2940px;height:1468px;border-radius:0 0 20px 20px;box-shadow:inset 2px 0 0 rgba(255,255,255,0.2), inset -2px 0 0 rgba(255,255,255,0.2), inset 0 -2px 0 rgba(255,255,255,0.2), 0 0 0 40px #0d150d"></div>
</body></html>
